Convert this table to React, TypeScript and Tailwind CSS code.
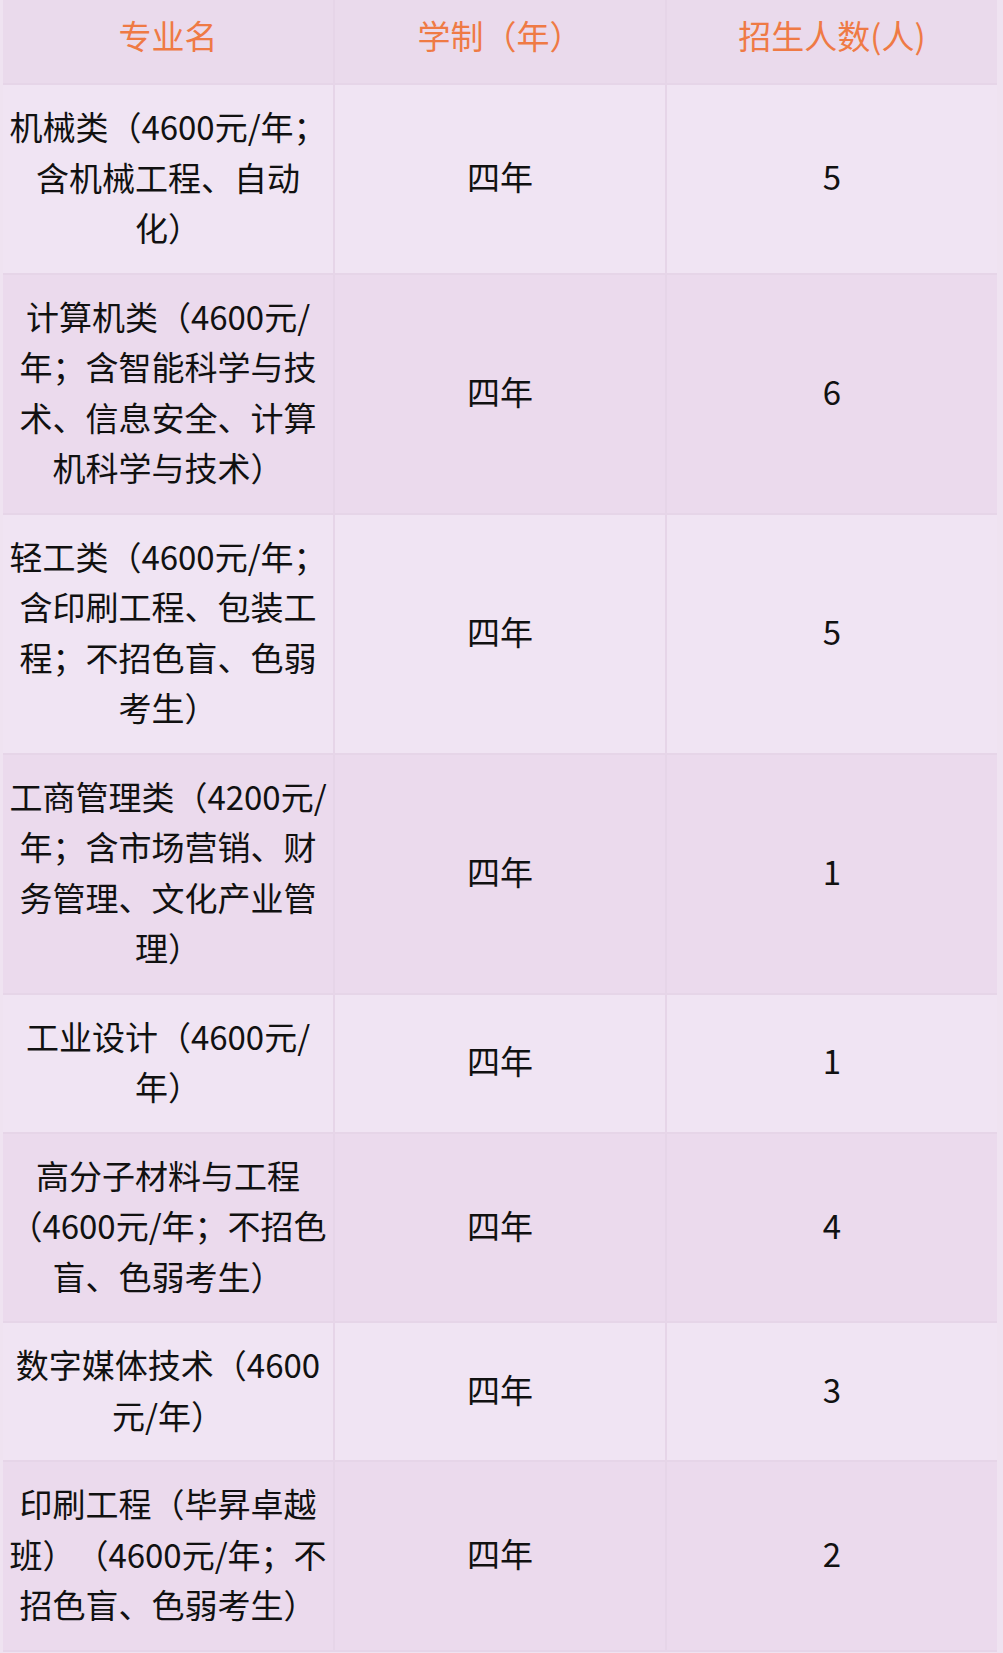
const FONT = {
  fontFamily: '"Noto Sans CJK SC", "Noto Sans", sans-serif',
};

type Row = { name: string[]; years: string; count: string };

const ROWS: Row[] = [
  { name: ["机械类（4600元/年；", "含机械工程、自动", "化）"], years: "四年", count: "5" },
  { name: ["计算机类（4600元/", "年；含智能科学与技", "术、信息安全、计算", "机科学与技术）"], years: "四年", count: "6" },
  { name: ["轻工类（4600元/年；", "含印刷工程、包装工", "程；不招色盲、色弱", "考生）"], years: "四年", count: "5" },
  { name: ["工商管理类（4200元/", "年；含市场营销、财", "务管理、文化产业管", "理）"], years: "四年", count: "1" },
  { name: ["工业设计（4600元/", "年）"], years: "四年", count: "1" },
  { name: ["高分子材料与工程", "（4600元/年；不招色", "盲、色弱考生）"], years: "四年", count: "4" },
  { name: ["数字媒体技术（4600", "元/年）"], years: "四年", count: "3" },
  { name: ["印刷工程（毕昇卓越", "班）（4600元/年；不", "招色盲、色弱考生）"], years: "四年", count: "2" },
];

export default function App() {
  return (
    <div
      className="min-h-[1653px] bg-[#efe3f1] pl-[3px] pr-[6px] [text-spacing-trim:space-all]"
      style={FONT}
    >
      <div className="grid grid-cols-3 gap-[2px] bg-[#e6d5e8] pb-[2px]">
        {/* 表头 */}
        {["专业名", "学制（年）", "招生人数(人)"].map((h) => (
          <div
            key={h}
            className="bg-[#eadaec] pt-[10px] pb-[23px] text-center text-[33px] leading-[50px] text-[#ef7a45] whitespace-nowrap"
          >
            {h}
          </div>
        ))}

        {ROWS.map((row, i) => {
          const bg = i % 2 === 0 ? "bg-[#f0e4f3]" : "bg-[#ebdaed]";
          return (
            <div key={i} className="contents">
              <div className={`${bg} pt-[16px] pb-[20px] px-[1px] text-center text-[33px] leading-[50.5px] text-[#111]`}>
                {row.name.map((line, j) => (
                  <div key={j} className="whitespace-nowrap">
                    {line}
                  </div>
                ))}
              </div>
              <div className={`${bg} flex items-center justify-center pb-[4px] text-[33px] text-[#111]`}>
                {row.years}
              </div>
              <div className={`${bg} flex items-center justify-center pb-[4px] text-[33px] text-[#111]`}>
                {row.count}
              </div>
            </div>
          );
        })}
      </div>
    </div>
  );
}
